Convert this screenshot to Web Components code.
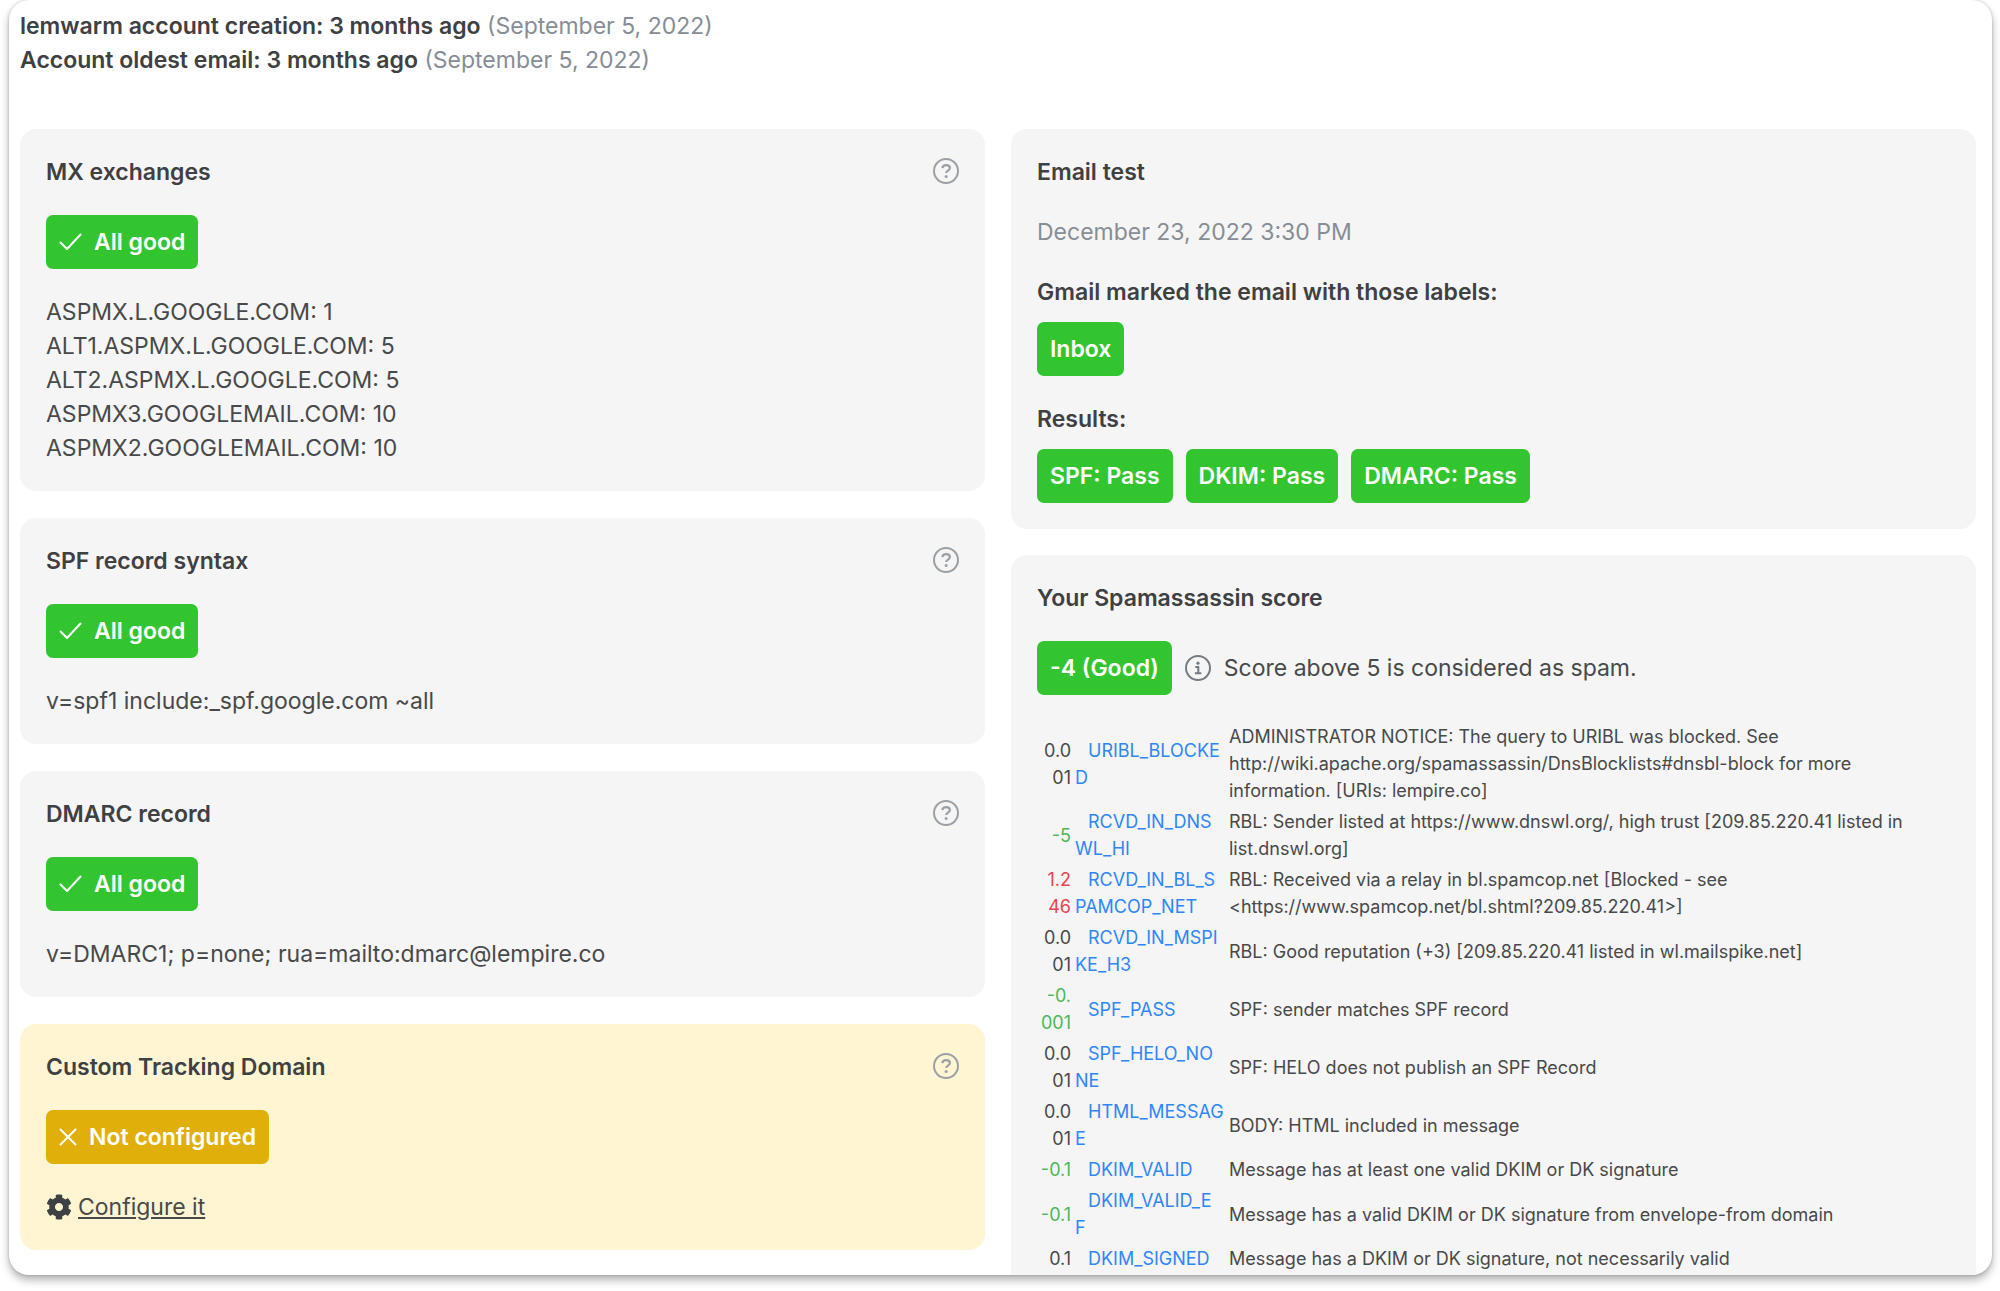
<!DOCTYPE html>
<html lang="en">
<head>
<meta charset="utf-8">
<meta name="viewport" content="width=device-width, initial-scale=1">
<title>lemwarm - Technical report</title>
<style>
    :root {
        --text: #48494a;
        --strong: #3e4042;
        --muted: #868d95;
        --green: #32c52f;
        --yellow: #e0af09;
        --link: #2e86fb;
        --space: 26px;
        --space-half: 13px;
    }

    body {
        margin: 0;
        background: #fff;
        color: var(--text);
        font: 23px/34px Inter, "Liberation Sans", sans-serif;
    }

    p, ul {
        margin: 0;
        padding: 0;
        list-style: none;
    }

    strong {
        color: var(--strong);
        font-weight: 600;
    }

    .muted {
        color: var(--muted);
    }
</style>
</head>
<body>

<report-panel>
    <p slot="summary"><strong>lemwarm account creation: 3 months ago</strong> <span class="muted">(September 5, 2022)</span></p>
    <p slot="summary"><strong>Account oldest email: 3 months ago</strong> <span class="muted">(September 5, 2022)</span></p>

    <report-card slot="left" heading="MX exchanges" help>
        <status-badge icon="check">All good</status-badge>
        <ul>
            <li>ASPMX.L.GOOGLE.COM: 1</li>
            <li>ALT1.ASPMX.L.GOOGLE.COM: 5</li>
            <li>ALT2.ASPMX.L.GOOGLE.COM: 5</li>
            <li>ASPMX3.GOOGLEMAIL.COM: 10</li>
            <li>ASPMX2.GOOGLEMAIL.COM: 10</li>
        </ul>
    </report-card>
    <report-card slot="left" heading="SPF record syntax" help>
        <status-badge icon="check">All good</status-badge>
        <p>v=spf1 include:_spf.google.com ~all</p>
    </report-card>
    <report-card slot="left" heading="DMARC record" help>
        <status-badge icon="check">All good</status-badge>
        <p>v=DMARC1; p=none; rua=mailto:dmarc@lempire.co</p>
    </report-card>
    <report-card slot="left" heading="Custom Tracking Domain" help tone="warning">
        <status-badge icon="cross" tone="warning">Not configured</status-badge>
        <configure-link href="#configure">Configure it</configure-link>
    </report-card>

    <report-card slot="right" heading="Email test">
        <p class="muted">December 23, 2022 3:30 PM</p>
        <badge-group label="Gmail marked the email with those labels:">
            <status-badge>Inbox</status-badge>
        </badge-group>
        <badge-group label="Results:">
            <status-badge>SPF: Pass</status-badge>
            <status-badge>DKIM: Pass</status-badge>
            <status-badge>DMARC: Pass</status-badge>
        </badge-group>
    </report-card>
    <report-card slot="right" heading="Your Spamassassin score">
        <score-line>
            <status-badge slot="score">-4 (Good)</status-badge>
            Score above 5 is considered as spam.
        </score-line>
        <spam-rules></spam-rules>
    </report-card>
</report-panel>

<script>
const icons = {
    check: `<svg width="23" height="18" viewBox="0 0 23 18" fill="none" stroke="currentColor" stroke-width="2" stroke-linecap="round" stroke-linejoin="round"><path d="M1.500 9.500l6.500 6.500L21.500 1.500"/></svg>`,
    cross: `<svg width="18" height="18" viewBox="0 0 18 18" fill="none" stroke="currentColor" stroke-width="2" stroke-linecap="round"><path d="M1.500 1.500l15 15M16.500 1.500l-15 15"/></svg>`,
    help: `<svg width="26" height="26" viewBox="0 0 26 26" fill="none" stroke="currentColor" stroke-width="2"><circle cx="13" cy="13" r="12"/><path stroke-width="2.200" d="M9.300 10.200c.3-2 1.800-3 3.800-3 2.200 0 3.800 1.100 3.800 2.900 0 2.600-3.700 2.500-3.700 4.900"/><circle cx="13.100" cy="18.600" r="1.500" fill="currentColor" stroke="none"/></svg>`,
    info: `<svg width="26" height="26" viewBox="0 0 26 26" fill="none" stroke="currentColor" stroke-width="2"><circle cx="13" cy="13" r="12"/><circle cx="13" cy="8.200" r="1.600" fill="currentColor" stroke="none"/><path d="M10.300 12h3v6M9.900 18.200h6.400"/></svg>`,
    cog: `<svg width="26" height="26" viewBox="0 0 512 512" fill="currentColor"><path d="M487.400 315.700l-42.600-24.600c4.300-23.200 4.300-47 0-70.200l42.600-24.600c4.900-2.800 7.100-8.600 5.500-14-11.100-35.600-30-67.800-54.700-94.600-3.800-4.100-10-5.100-14.800-2.300L380.800 110c-17.900-15.400-38.500-27.300-60.800-35.100V25.800c0-5.600-3.900-10.500-9.400-11.700-36.700-8.200-74.300-7.800-109.200 0-5.500 1.200-9.400 6.100-9.400 11.700V75c-22.200 7.900-42.800 19.800-60.800 35.100L88.700 85.500c-4.900-2.800-11-1.900-14.800 2.300-24.700 26.700-43.600 58.900-54.700 94.600-1.700 5.400.6 11.200 5.500 14L67.300 221c-4.300 23.200-4.300 47 0 70.200l-42.600 24.600c-4.900 2.800-7.100 8.600-5.500 14 11.100 35.600 30 67.800 54.700 94.600 3.800 4.100 10 5.100 14.800 2.300l42.600-24.600c17.900 15.400 38.500 27.300 60.800 35.100v49.200c0 5.600 3.900 10.500 9.400 11.700 36.700 8.200 74.300 7.800 109.200 0 5.500-1.200 9.400-6.100 9.400-11.700v-49.200c22.200-7.900 42.800-19.800 60.800-35.100l42.600 24.600c4.900 2.800 11 1.900 14.800-2.300 24.700-26.700 43.600-58.900 54.700-94.600 1.500-5.500-.7-11.300-5.600-14.100zM256 336c-44.100 0-80-35.900-80-80s35.900-80 80-80 80 35.900 80 80-35.900 80-80 80z"/></svg>`
};

class ReportPanel extends HTMLElement {
    constructor() {
        super();
        this.attachShadow({ mode: "open" }).innerHTML = /*html*/`
<style>
    :host {
        display: flex;
        flex-direction: column;
        gap: calc(var(--space) * 2);
        box-sizing: border-box;
        height: calc(100vh - 16px);
        margin: 0 8px 16px 9px;
        padding: 9px 16px 0 11px;
        overflow: hidden;
        border-radius: 20px;
        background: #fff;
        box-shadow: 0 5px 8px rgba(0, 0, 0, .3), 0 0 3px rgba(0, 0, 0, .2);
    }

    .columns {
        display: grid;
        grid-template-columns: 1fr 1fr;
        gap: var(--space);
        align-items: start;
    }

    .column {
        display: flex;
        flex-direction: column;
        gap: 27px;
        min-width: 0;
    }

    .column.right {
        gap: var(--space);
    }
</style>

<header><slot name="summary"></slot></header>
<main class="columns">
    <div class="column"><slot name="left"></slot></div>
    <div class="column right"><slot name="right"></slot></div>
</main>
`;
    }
}

class ReportCard extends HTMLElement {
    constructor() {
        super();
        this.attachShadow({ mode: "open" });
    }

    connectedCallback() {
        const heading = this.getAttribute("heading");
        const help = `<button type="button" aria-label="Help: ${heading}">${icons.help}</button>`;
        this.shadowRoot.innerHTML = /*html*/`
<style>
    :host {
        display: flex;
        flex-direction: column;
        align-items: flex-start;
        gap: var(--space);
        padding: var(--space);
        border-radius: 16px;
        background: #f5f5f5;
    }

    :host([tone="warning"]) {
        background: #fff5d3;
    }

    header {
        display: flex;
        justify-content: space-between;
        align-self: stretch;
    }

    h2 {
        margin: 0;
        color: var(--strong);
        font: inherit;
        font-weight: 600;
    }

    button {
        display: flex;
        align-items: center;
        height: 32px;
        padding: 0;
        border: none;
        background: none;
        color: #9aa0a6;
    }

    button:hover {
        cursor: pointer
    }
</style>

<header><h2>${heading}</h2>${this.hasAttribute("help") ? help : ""}</header>
<slot></slot>
`;
    }
}

class StatusBadge extends HTMLElement {
    constructor() {
        super();
        this.attachShadow({ mode: "open" });
    }

    connectedCallback() {
        this.shadowRoot.innerHTML = /*html*/`
<style>
    :host {
        display: inline-flex;
        align-items: center;
        gap: 12px;
        padding: 10px var(--space-half);
        border-radius: 7px;
        background: var(--green);
        color: #fff;
        font-weight: 600;
        white-space: nowrap;
    }

    :host([tone="warning"]) {
        background: var(--yellow);
    }
</style>
${icons[this.getAttribute("icon")] || ""}<span><slot></slot></span>
`;
    }
}

class BadgeGroup extends HTMLElement {
    constructor() {
        super();
        this.attachShadow({ mode: "open" });
    }

    connectedCallback() {
        this.shadowRoot.innerHTML = /*html*/`
<style>
    :host {
        display: flex;
        flex-direction: column;
        gap: var(--space-half);
    }

    .label {
        color: var(--strong);
        font-weight: 600;
    }

    .badges {
        display: flex;
        flex-wrap: wrap;
        gap: var(--space-half);
    }
</style>

<div class="label">${this.getAttribute("label")}</div>
<div class="badges"><slot></slot></div>
`;
    }
}

class ConfigureLink extends HTMLElement {
    constructor() {
        super();
        this.attachShadow({ mode: "open" });
    }

    connectedCallback() {
        this.shadowRoot.innerHTML = /*html*/`
<style>
    :host {
        display: flex;
        align-items: center;
        gap: 6px;
        color: var(--strong);
    }

    a {
        color: var(--text);
        text-decoration: underline;
    }
</style>
${icons.cog}<a href="${this.getAttribute("href")}"><slot></slot></a>
`;
    }
}

class ScoreLine extends HTMLElement {
    constructor() {
        super();
        this.attachShadow({ mode: "open" }).innerHTML = /*html*/`
<style>
    :host {
        display: flex;
        align-items: center;
        gap: var(--space-half);
    }

    svg {
        flex: none;
        color: #747b82;
    }
</style>
<slot name="score"></slot>${icons.info}<span><slot></slot></span>
`;
    }
}

const rules = [
    ["0.001", "URIBL_BLOCKED", "ADMINISTRATOR NOTICE: The query to URIBL was blocked. See http://wiki.apache.org/spamassassin/DnsBlocklists#dnsbl-block for more information. [URIs: lempire.co]"],
    ["-5", "RCVD_IN_DNSWL_HI", "RBL: Sender listed at https://www.dnswl.org/, high trust [209.85.220.41 listed in list.dnswl.org]"],
    ["1.246", "RCVD_IN_BL_SPAMCOP_NET", "RBL: Received via a relay in bl.spamcop.net [Blocked - see <https://www.spamcop.net/bl.shtml?209.85.220.41>]"],
    ["0.001", "RCVD_IN_MSPIKE_H3", "RBL: Good reputation (+3) [209.85.220.41 listed in wl.mailspike.net]"],
    ["-0.001", "SPF_PASS", "SPF: sender matches SPF record"],
    ["0.001", "SPF_HELO_NONE", "SPF: HELO does not publish an SPF Record"],
    ["0.001", "HTML_MESSAGE", "BODY: HTML included in message"],
    ["-0.1", "DKIM_VALID", "Message has at least one valid DKIM or DK signature"],
    ["-0.1", "DKIM_VALID_E\nF", "Message has a valid DKIM or DK signature from envelope-from domain"],
    ["0.1", "DKIM_SIGNED", "Message has a DKIM or DK signature, not necessarily valid"]
];

class SpamRules extends HTMLElement {
    constructor() {
        super();
        this.attachShadow({ mode: "open" }).innerHTML = /*html*/`
<style>
    :host {
        display: block;
        align-self: stretch;
        font-size: 18px;
        line-height: 27px;
    }

    table {
        width: 100%;
        table-layout: fixed;
        border-collapse: collapse;
    }

    .score-col {
        width: 36px;
    }

    .rule-col {
        width: 154px;
    }

    td {
        padding: 2px;
        vertical-align: middle;
    }

    .score {
        text-align: right;
        word-break: break-all;
    }

    .good {
        color: #4db858;
    }

    .bad {
        color: #ea4350;
    }

    .rule {
        text-indent: var(--space-half);
        white-space: pre-line;
        word-break: break-all;
    }

    a {
        color: var(--link);
        text-decoration: none;
    }
</style>

<table aria-label="Spamassassin rules">
    <colgroup><col class="score-col"><col class="rule-col"><col></colgroup>
    <tbody></tbody>
</table>
`;
    }

    connectedCallback() {
        const body = this.shadowRoot.querySelector("tbody");
        body.innerHTML = "";
        for (const [score, rule, text] of rules) {
            const row = body.insertRow();
            const cell = row.insertCell();
            cell.className = "score " + this.tone(Number(score));
            cell.textContent = score;
            const link = document.createElement("a");
            link.href = "#" + rule.replace("\n", "");
            link.textContent = rule;
            const name = row.insertCell();
            name.className = "rule";
            name.appendChild(link);
            row.insertCell().textContent = text;
        }
    }

    tone(score) {
        if (score < 0) return "good";
        return score >= 1 ? "bad" : "";
    }
}

customElements.define("report-panel", ReportPanel);
customElements.define("report-card", ReportCard);
customElements.define("status-badge", StatusBadge);
customElements.define("badge-group", BadgeGroup);
customElements.define("configure-link", ConfigureLink);
customElements.define("score-line", ScoreLine);
customElements.define("spam-rules", SpamRules);
</script>
</body>
</html>
